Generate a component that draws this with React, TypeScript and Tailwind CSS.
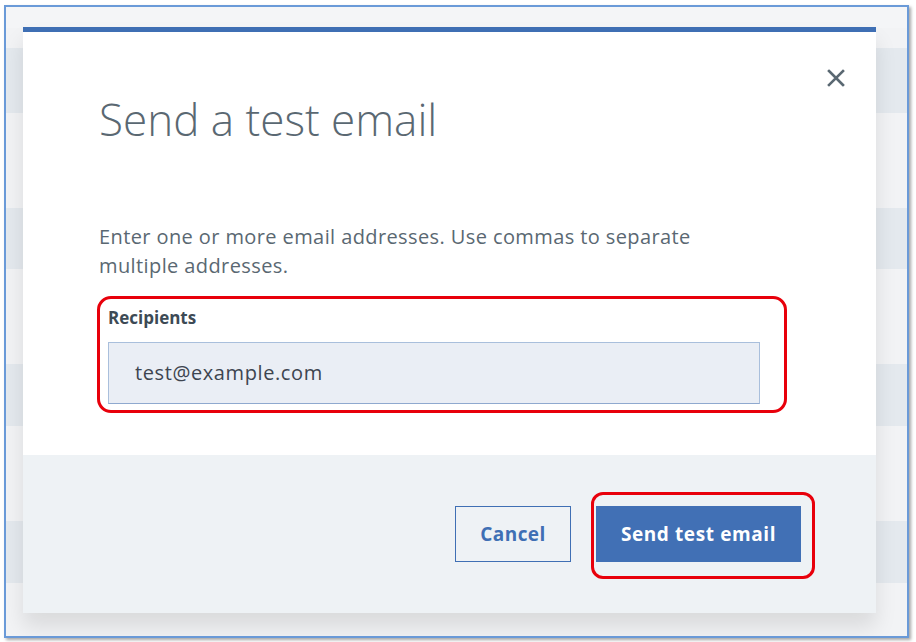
import React from 'react';

const font = { fontFamily: '"Open Sans", "Noto Sans", Arial, sans-serif' };

const stripes = [
  'h-[21px] bg-[#f4f5f7]',
  'h-[20px] bg-[#f2f3f5]',
  'h-[65px] bg-[#e4e9ee]',
  'h-[95px] bg-[#f2f3f5]',
  'h-[61px] bg-[#e4e9ee]',
  'h-[95px] bg-[#f2f3f5]',
  'h-[62px] bg-[#e4e9ee]',
  'h-[95px] bg-[#f2f3f5]',
  'h-[62px] bg-[#e4e9ee]',
  'h-[60px] bg-[#f2f3f5]',
];

const CloseIcon = () => (
  <svg width="20" height="20" viewBox="0 0 20 20" fill="none">
    <path d="M3 3L17 17M17 3L3 17" stroke="#5a6872" strokeWidth="2.6" strokeLinecap="square" />
  </svg>
);

export default function App() {
  return (
    <div className="w-[916px] h-[642px] bg-white overflow-hidden" style={font}>
      <div className="relative ml-[4px] mt-[5px] w-[905px] h-[633px] border-2 border-[#6a9ad8] bg-[#f2f3f5] shadow-[2px_2px_3px_rgba(0,0,0,0.35)] overflow-hidden">
        {/* rows of the page behind the dialog */}
        <div className="flex flex-col">
          {stripes.map((s, i) => (
            <div key={i} className={s} />
          ))}
        </div>

        <div className="absolute left-[17px] top-[20px] w-[853px] flex flex-col bg-white border-t-[5px] border-[#3f6fb4] shadow-[0_14px_20px_rgba(0,0,0,0.10)]">
          <div className="relative px-[76px] pt-[65px] pb-[42px]">
            <button type="button" className="absolute right-[30px] top-[36px]">
              <CloseIcon />
            </button>
            <h1 className="text-[44px] font-light leading-none text-[#5a6872]">Send a test email</h1>
            <p className="mt-[81px] text-[20px] leading-[29px] tracking-[0.4px] text-[#5a6872] w-[620px]">
              Enter one or more email addresses. Use commas to separate multiple addresses.
            </p>
            <div className="mt-[16px] -ml-[2px] w-[690px] border-[3px] border-[#e8000b] rounded-[14px] px-[8px] pt-[6px] pb-[6px]">
              <label className="block text-[17px] font-bold text-[#3d4a55] leading-[26px]">Recipients</label>
              <div className="mt-[11px] h-[62px] w-[652px] flex items-center bg-[#eaeef5] border border-[#a9bfdc] border-b-[#8fa9cf] px-[26px] text-[20px] tracking-[0.6px] text-[#3d4550]">
                test@example.com
              </div>
            </div>
          </div>
          <div className="bg-[#eef2f5] h-[158px] flex justify-end items-start pt-[51px] pr-[75px]">
            <div className="flex items-center gap-[25px]">
              <button type="button" className="h-[56px] w-[116px] border border-[#3f6fb4] text-[#3f6fb4] text-[19px] font-bold tracking-[0.4px]">
                Cancel
              </button>
              <div className="relative">
                <button type="button" className="h-[56px] w-[205px] bg-[#4170b5] text-white text-[19px] font-bold tracking-[0.6px] block">
                  Send test email
                </button>
                <div className="absolute -left-[5px] -top-[14px] w-[224px] h-[87px] border-[3px] border-[#e8000b] rounded-[12px] pointer-events-none" />
              </div>
            </div>
          </div>
        </div>
      </div>
    </div>
  );
}
